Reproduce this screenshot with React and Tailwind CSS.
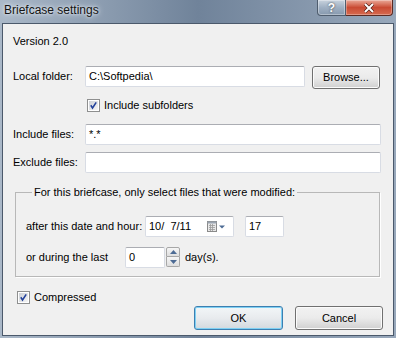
import React from "react";

function CheckBox({ checked }) {
  return (
    <div className="w-[13px] h-[13px] border border-[#8e8f8f] bg-white p-[1px] shrink-0">
      <div className="w-full h-full bg-linear-to-br from-[#cbcfd5] to-[#f6f6f6] relative">
        {checked && (
          <svg viewBox="0 0 11 11" className="absolute inset-0 w-full h-full">
            <path d="M2.2 5.2 L4.3 8.6 L8.8 1.6" fill="none" stroke="#21409a" strokeWidth="1.9" />
          </svg>
        )}
      </div>
    </div>
  );
}

function TextBox({ value, className = "" }) {
  return (
    <div
      className={`h-[21px] bg-white border border-[#d8dce4] border-t-[#abadb3] rounded-[2px] flex items-center px-[3px] whitespace-pre ${className}`}
    >
      {value}
    </div>
  );
}

function Button({ label, def = false, className = "" }) {
  return (
    <div
      className={`h-[23px] rounded-[3px] border flex items-center justify-center ${
        def
          ? "border-[#3c7fb1] shadow-[inset_0_0_0_1px_#7fd0f3] bg-linear-to-b from-[#f2f6f8] via-[#e8ebee] to-[#d3d9de]"
          : "border-[#707070] shadow-[inset_0_0_0_1px_#fbfbfb] bg-linear-to-b from-[#f2f2f2] via-[#ebebeb] to-[#d0d0d0]"
      } ${className}`}
    >
      {label}
    </div>
  );
}

export default function App() {
  return (
    <div className="relative w-[396px] h-[338px] overflow-hidden flex flex-col bg-linear-to-r from-[#aab8c8] via-[#70839a] to-[#98a8bb] font-['Liberation_Sans',Arial,sans-serif] text-[11px] text-black">
      {/* title bar */}
      <div className="h-[23px] flex items-start shrink-0">
        <div className="pl-[4px] pt-[3px] text-[12px] leading-[15px] text-[#141414] [text-shadow:0_0_6px_#e8eef5,0_0_3px_#e8eef5]">
          Briefcase settings
        </div>
        <div className="ml-auto mr-[3px] flex">
          <div className="w-[29px] h-[16px] rounded-bl-[4px] border border-t-0 border-[#4f5d6e] bg-linear-to-b from-[#c9d3de] via-[#9fb0c3] to-[#8799ae] shadow-[inset_0_0_0_1px_rgba(255,255,255,0.35)] flex items-center justify-center text-white font-bold text-[12px] leading-none [text-shadow:0_0_2px_#333]">
            ?
          </div>
          <div className="w-[47px] h-[16px] rounded-br-[4px] border border-t-0 border-l-0 border-[#5b2a22] bg-linear-to-b from-[#e9a898] via-[#c94a33] to-[#d66a4f] shadow-[inset_0_0_0_1px_rgba(255,255,255,0.3)] flex items-center justify-center">
            <svg viewBox="0 0 12 10" className="w-[12px] h-[10px]">
              <path d="M2 1 L10 9 M10 1 L2 9" stroke="#4a1a12" strokeWidth="3.2" />
              <path d="M2 1 L10 9 M10 1 L2 9" stroke="#ffffff" strokeWidth="2" />
            </svg>
          </div>
        </div>
      </div>

      {/* client area */}
      <div className="flex-1 mx-[2px] mb-[2px] border border-[#4b596b] bg-[#f0f0f0] flex flex-col pl-[10px]">
        <div className="mt-[10px] leading-[15px]">Version 2.0</div>

        <div className="mt-[17px] flex items-start">
          <div className="w-[72px] leading-[21px]">Local folder:</div>
          <TextBox value="C:\Softpedia\" className="w-[220px]" />
          <Button label="Browse..." className="ml-[7px] w-[68px]" />
        </div>

        <div className="mt-[10px] ml-[74px] flex items-center gap-[4px] h-[13px]">
          <CheckBox checked />
          <span>Include subfolders</span>
        </div>

        <div className="mt-[12px] flex items-start">
          <div className="w-[72px] leading-[20px]">Include files:</div>
          <TextBox value="*.*" className="w-[296px] h-[20px]" />
        </div>

        <div className="mt-[7px] flex items-start">
          <div className="w-[72px] leading-[20px]">Exclude files:</div>
          <TextBox value="" className="w-[296px] h-[20px]" />
        </div>

        <fieldset className="mt-[12px] ml-[2px] w-[365px] border border-[#b8b8b8] shadow-[1px_1px_0_#fff] pl-[10px] pb-[8px]">
          <legend className="ml-[6px] px-[2px] leading-[15px]">
            For this briefcase, only select files that were modified:
          </legend>
          <div className="mt-[16px] flex items-start">
            <div className="w-[119px] leading-[21px]">after this date and hour:</div>
            <div className="w-[89px] h-[21px] bg-white border border-[#d8dce4] border-t-[#abadb3] rounded-[2px] flex items-center pl-[3px] whitespace-pre">
              <span>10/  7/11</span>
              <svg viewBox="0 0 20 11" className="ml-auto mr-[6px] w-[20px] h-[11px]">
                <rect x="0.5" y="0.5" width="9" height="10" fill="#e8e8e8" stroke="#8a8a8a" />
                <rect x="0.5" y="0.5" width="9" height="2" fill="#9aa4b0" />
                <path d="M2 4.5h6M2 6.5h6M2 8.5h6M3.5 3v7M5.5 3v7" stroke="#9a9a9a" strokeWidth="0.8" />
                <path d="M12 4.5 L18 4.5 L15 7.5 Z" fill="#4d6b94" />
              </svg>
            </div>
            <TextBox value="17" className="ml-[11px] w-[39px]" />
          </div>
          <div className="mt-[10px] flex items-start">
            <div className="w-[99px] leading-[20px]">or during the last</div>
            <TextBox value="0" className="w-[40px] h-[20px]" />
            <div className="ml-[1px] w-[14px] h-[20px] flex flex-col">
              <div className="h-[10px] border border-[#a7a7a7] rounded-t-[2px] bg-linear-to-b from-[#f6f6f6] to-[#dedede] flex items-center justify-center">
                <svg viewBox="0 0 7 4" className="w-[7px] h-[4px]">
                  <path d="M0 4 L3.5 0 L7 4 Z" fill="#4d6b94" />
                </svg>
              </div>
              <div className="h-[10px] border border-t-0 border-[#a7a7a7] rounded-b-[2px] bg-linear-to-b from-[#f6f6f6] to-[#dedede] flex items-center justify-center">
                <svg viewBox="0 0 7 4" className="w-[7px] h-[4px]">
                  <path d="M0 0 L3.5 4 L7 0 Z" fill="#4d6b94" />
                </svg>
              </div>
            </div>
            <div className="ml-[5px] leading-[20px]">day(s).</div>
          </div>
        </fieldset>

        <div className="mt-[14px] flex items-start pr-[10px]">
          <div className="ml-[4px] flex items-center gap-[4px] h-[13px]">
            <CheckBox checked />
            <span>Compressed</span>
          </div>
          <div className="ml-auto mt-[15px] flex gap-[12px]">
            <Button label="OK" def className="w-[89px] h-[24px]" />
            <Button label="Cancel" className="w-[88px] h-[24px]" />
          </div>
        </div>
      </div>
    </div>
  );
}
